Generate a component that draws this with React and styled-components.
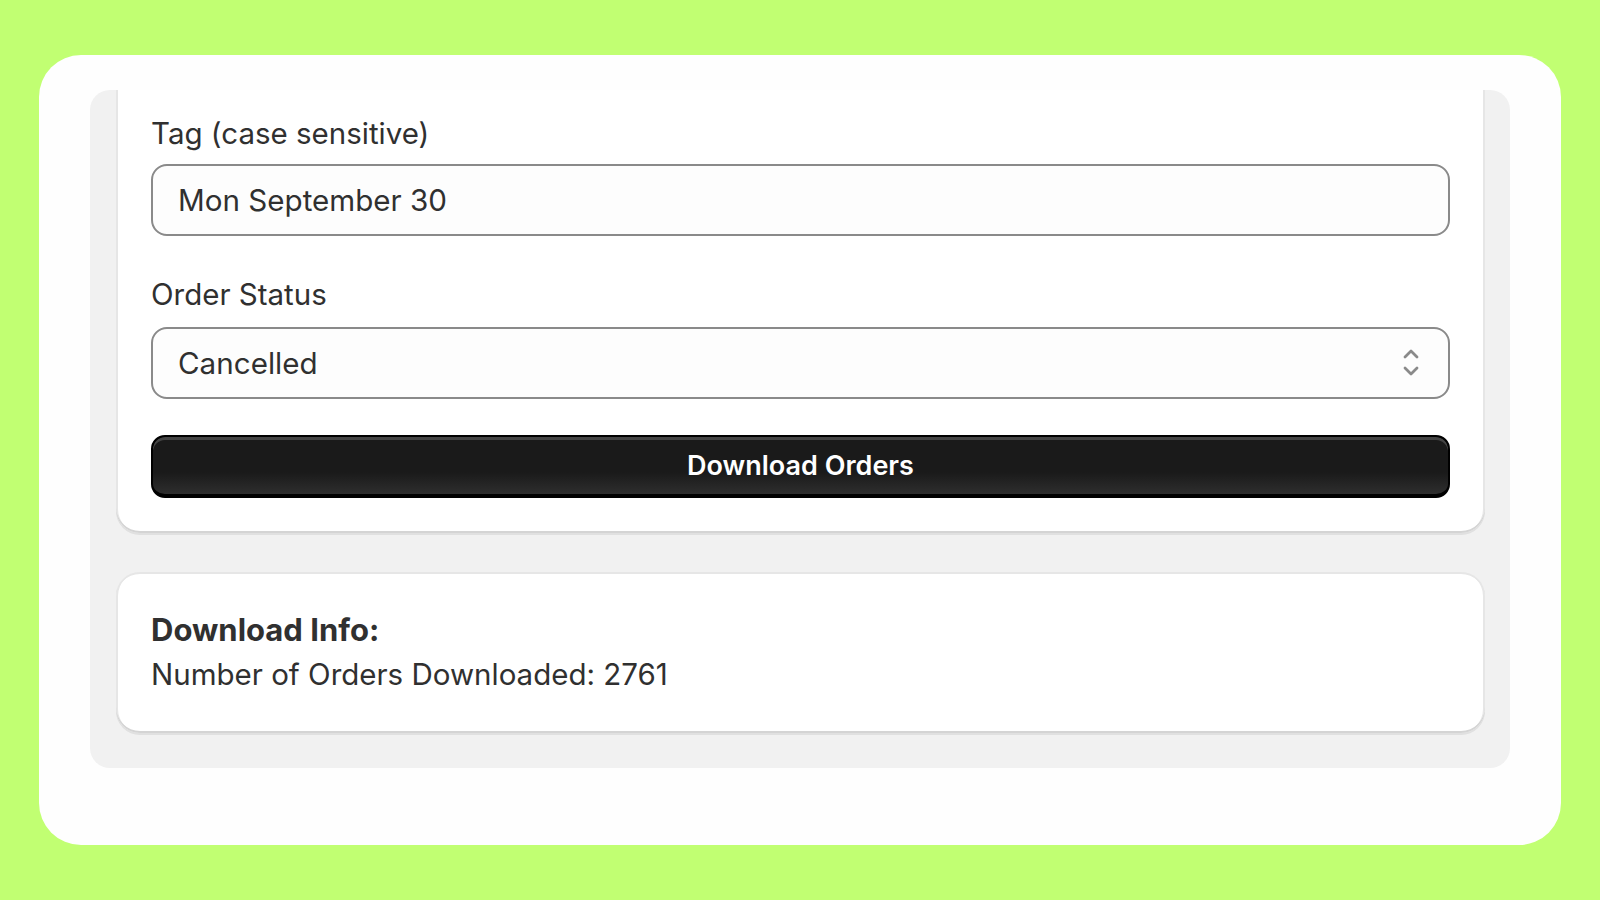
import React from "react";
import styled, { createGlobalStyle } from "styled-components";

const GlobalStyle = createGlobalStyle`
  html, body {
    margin: 0;
    padding: 0;
    background: #c1ff72;
    font-family: Inter, "Noto Sans", sans-serif;
    color: #303030;
  }
`;

const Page = styled.div`
  width: 1600px;
  height: 900px;
  box-sizing: border-box;
  padding: 55px 39px 55px 39px;
`;

const Frame = styled.div`
  height: 790px;
  background: #fefefe;
  border-radius: 42px;
  padding: 35px 51px 0;
  box-sizing: border-box;
`;

const Panel = styled.div`
  background: #f1f1f1;
  border-radius: 20px;
  overflow: hidden;
  padding: 0 25px 35px 26px;
  display: flex;
  flex-direction: column;
  gap: 39px;
`;

const Card = styled.div`
  background: #fff;
  border-radius: 24px;
  padding: ${(p) => (p.cut ? "64px 35px 35px" : "36px 35px 37px")};
  margin-top: ${(p) => (p.cut ? "-40px" : "0")};
  box-shadow: 0 2px 0 0 rgba(26, 26, 26, 0.08), inset 0 -2px 0 0 #d4d4d4,
    inset 2px 0 0 0 #e6e6e6, inset -2px 0 0 0 #e6e6e6, inset 0 2px 0 0 #e6e6e6;
  display: flex;
  flex-direction: column;
`;

const Field = styled.div`
  display: flex;
  flex-direction: column;
  gap: ${(p) => p.gap || "12px"};
  margin-bottom: ${(p) => p.mb || "0"};
`;

const Label = styled.label`
  font-size: 29.5px;
  line-height: 38px;
  color: #303030;
`;

const InputBox = styled.div`
  height: 72px;
  box-sizing: border-box;
  border: 2px solid #8a8a8a;
  border-radius: 16px;
  background: #fdfdfd;
  display: flex;
  align-items: center;
  justify-content: space-between;
  padding: 0 26px 0 25px;
  font-size: 29.6px;
  color: #303030;
`;

const Chevron = styled.svg`
  width: 22px;
  height: 34px;
  color: #8a8a8a;
`;

const Button = styled.button`
  height: 63px;
  width: 100%;
  border: 2px solid #000;
  border-bottom-width: 4px;
  border-radius: 14px;
  background: linear-gradient(#1a1a1a 0%, #1a1a1a 62%, #2e2e2e 100%);
  box-shadow: inset 0 3px 0 0 #444;
  color: #fff;
  font-family: Inter, sans-serif;
  font-size: 27px;
  font-weight: 600;
  cursor: pointer;
`;

const InfoTitle = styled.div`
  font-size: 31px;
  font-weight: 700;
  line-height: 44px;
`;

const InfoText = styled.div`
  font-size: 29.5px;
  line-height: 44px;
`;

export default function App() {
  return (
    <>
      <GlobalStyle />
      <Page>
        <Frame>
          <Panel>
            <Card cut>
              <Field gap="12px" mb="39px">
                <Label>Tag (case sensitive)</Label>
                <InputBox>Mon September 30</InputBox>
              </Field>
              <Field gap="14px" mb="36px">
                <Label>Order Status</Label>
                <InputBox>
                  Cancelled
                  <Chevron viewBox="0 0 22 34" fill="none">
                    <path d="M5 11 L11 5 L17 11" stroke="currentColor" strokeWidth="2.8" strokeLinecap="round" strokeLinejoin="round" />
                    <path d="M5 22 L11 28 L17 22" stroke="currentColor" strokeWidth="2.8" strokeLinecap="round" strokeLinejoin="round" />
                  </Chevron>
                </InputBox>
              </Field>
              <Button>Download Orders</Button>
            </Card>
            <Card>
              <InfoTitle>Download Info:</InfoTitle>
              <InfoText>Number of Orders Downloaded: 2761</InfoText>
            </Card>
          </Panel>
        </Frame>
      </Page>
    </>
  );
}
